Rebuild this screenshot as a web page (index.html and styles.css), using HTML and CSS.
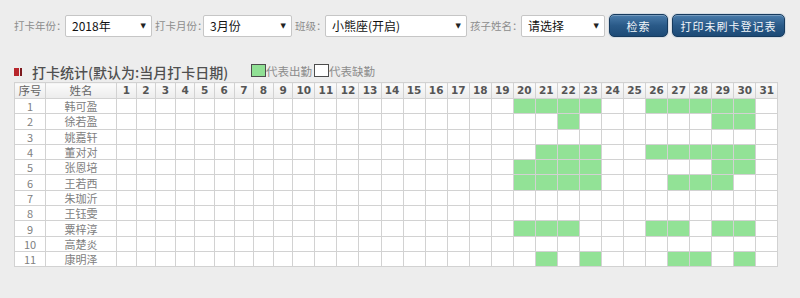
FILE: index.html
```html
<!DOCTYPE html>
<html lang="zh-CN">
<head>
<meta charset="utf-8">
<title>打卡统计</title>
<link rel="stylesheet" href="styles.css">
</head>
<body>
<div class="page">
  <div class="toolbar">
    <span class="lbl l1">打卡年份：</span>
    <div class="sel s1"><span>2018年</span><span class="arrow">▼</span></div>
    <span class="lbl l2">打卡月份：</span>
    <div class="sel s2"><span>3月份</span><span class="arrow">▼</span></div>
    <span class="lbl l3">班级：</span>
    <div class="sel s3"><span>小熊座(开启)</span><span class="arrow">▼</span></div>
    <span class="lbl l4">孩子姓名：</span>
    <div class="sel s4"><span>请选择</span><span class="arrow">▼</span></div>
    <div class="btn b1">检索</div>
    <div class="btn b2">打印未刷卡登记表</div>
  </div>

  <div class="titlebar">
    <span class="mark"><i class="m1"></i><i class="m2"></i></span>
    <span class="title">打卡统计(默认为:当月打卡日期)</span>
    <span class="box green"></span><span class="legend">代表出勤</span>
    <span class="box white"></span><span class="legend">代表缺勤</span>
  </div>

  <table class="grid">
    <colgroup>
      <col class="c-no"><col class="c-name">
      <col class="c-s"><col class="c-s"><col class="c-s"><col class="c-s"><col class="c-s"><col class="c-s"><col class="c-s"><col class="c-s"><col class="c-s">
      <col class="c-w"><col class="c-w"><col class="c-w"><col class="c-w"><col class="c-w"><col class="c-w"><col class="c-w"><col class="c-w"><col class="c-w"><col class="c-w"><col class="c-w">
      <col class="c-w"><col class="c-w"><col class="c-w"><col class="c-w"><col class="c-w"><col class="c-w"><col class="c-w"><col class="c-w"><col class="c-w"><col class="c-w"><col class="c-w">
    </colgroup>
    <thead>
      <tr>
        <th class="hn">序号</th><th class="hn">姓名</th>
        <th>1</th><th>2</th><th>3</th><th>4</th><th>5</th><th>6</th><th>7</th><th>8</th><th>9</th><th>10</th>
        <th>11</th><th>12</th><th>13</th><th>14</th><th>15</th><th>16</th><th>17</th><th>18</th><th>19</th><th>20</th>
        <th>21</th><th>22</th><th>23</th><th>24</th><th>25</th><th>26</th><th>27</th><th>28</th><th>29</th><th>30</th><th>31</th>
      </tr>
    </thead>
    <tbody>
      <tr><td>1</td><td>韩可盈</td><td></td><td></td><td></td><td></td><td></td><td></td><td></td><td></td><td></td><td></td><td></td><td></td><td></td><td></td><td></td><td></td><td></td><td></td><td></td><td class="g"></td><td class="g"></td><td class="g"></td><td class="g"></td><td></td><td></td><td class="g"></td><td class="g"></td><td class="g"></td><td class="g"></td><td class="g"></td><td></td></tr>
      <tr><td>2</td><td>徐若盈</td><td></td><td></td><td></td><td></td><td></td><td></td><td></td><td></td><td></td><td></td><td></td><td></td><td></td><td></td><td></td><td></td><td></td><td></td><td></td><td></td><td></td><td class="g"></td><td></td><td></td><td></td><td></td><td></td><td></td><td class="g"></td><td class="g"></td><td></td></tr>
      <tr><td>3</td><td>姚嘉轩</td><td></td><td></td><td></td><td></td><td></td><td></td><td></td><td></td><td></td><td></td><td></td><td></td><td></td><td></td><td></td><td></td><td></td><td></td><td></td><td></td><td></td><td></td><td></td><td></td><td></td><td></td><td></td><td></td><td></td><td></td><td></td></tr>
      <tr><td>4</td><td>董对对</td><td></td><td></td><td></td><td></td><td></td><td></td><td></td><td></td><td></td><td></td><td></td><td></td><td></td><td></td><td></td><td></td><td></td><td></td><td></td><td></td><td class="g"></td><td class="g"></td><td class="g"></td><td></td><td></td><td class="g"></td><td class="g"></td><td class="g"></td><td class="g"></td><td class="g"></td><td></td></tr>
      <tr><td>5</td><td>张恩培</td><td></td><td></td><td></td><td></td><td></td><td></td><td></td><td></td><td></td><td></td><td></td><td></td><td></td><td></td><td></td><td></td><td></td><td></td><td></td><td class="g"></td><td class="g"></td><td class="g"></td><td class="g"></td><td></td><td></td><td></td><td></td><td></td><td class="g"></td><td class="g"></td><td></td></tr>
      <tr><td>6</td><td>王若西</td><td></td><td></td><td></td><td></td><td></td><td></td><td></td><td></td><td></td><td></td><td></td><td></td><td></td><td></td><td></td><td></td><td></td><td></td><td></td><td class="g"></td><td class="g"></td><td class="g"></td><td class="g"></td><td></td><td></td><td></td><td class="g"></td><td class="g"></td><td class="g"></td><td></td><td></td></tr>
      <tr><td>7</td><td>朱珈沂</td><td></td><td></td><td></td><td></td><td></td><td></td><td></td><td></td><td></td><td></td><td></td><td></td><td></td><td></td><td></td><td></td><td></td><td></td><td></td><td></td><td></td><td></td><td></td><td></td><td></td><td></td><td></td><td></td><td></td><td></td><td></td></tr>
      <tr><td>8</td><td>王钰雯</td><td></td><td></td><td></td><td></td><td></td><td></td><td></td><td></td><td></td><td></td><td></td><td></td><td></td><td></td><td></td><td></td><td></td><td></td><td></td><td></td><td></td><td></td><td></td><td></td><td></td><td></td><td></td><td></td><td></td><td></td><td></td></tr>
      <tr><td>9</td><td>粟梓淳</td><td></td><td></td><td></td><td></td><td></td><td></td><td></td><td></td><td></td><td></td><td></td><td></td><td></td><td></td><td></td><td></td><td></td><td></td><td></td><td class="g"></td><td class="g"></td><td class="g"></td><td></td><td></td><td></td><td class="g"></td><td class="g"></td><td></td><td class="g"></td><td class="g"></td><td></td></tr>
      <tr><td>10</td><td>高楚炎</td><td></td><td></td><td></td><td></td><td></td><td></td><td></td><td></td><td></td><td></td><td></td><td></td><td></td><td></td><td></td><td></td><td></td><td></td><td></td><td></td><td></td><td></td><td></td><td></td><td></td><td></td><td></td><td></td><td></td><td></td><td></td></tr>
      <tr><td>11</td><td>康明泽</td><td></td><td></td><td></td><td></td><td></td><td></td><td></td><td></td><td></td><td></td><td></td><td></td><td></td><td></td><td></td><td></td><td></td><td></td><td></td><td></td><td class="g"></td><td></td><td class="g"></td><td></td><td></td><td></td><td class="g"></td><td class="g"></td><td></td><td class="g"></td><td></td></tr>
    </tbody>
  </table>
</div>
</body>
</html>
```

FILE: styles.css
```css
html, body {
  margin: 0;
  padding: 0;
}
body {
  background: #ededed;
  font-family: "Noto Sans CJK SC", "Noto Sans", sans-serif;
  color: #555;
}
.page {
  padding: 14px 0 0 14px;
}

/* toolbar */
.toolbar {
  display: flex;
  align-items: center;
  height: 23px;
}
.lbl {
  flex: 0 0 auto;
  box-sizing: border-box;
  font-size: 10.5px;
  color: #8c8c8c;
  white-space: nowrap;
  padding-left: 3px;
  line-height: 22px;
}
.l1 { width: 51px; padding-left: 0; }
.l2 { width: 51px; }
.l3 { width: 33px; }
.l4 { width: 54px; }

.sel {
  flex: 0 0 auto;
  box-sizing: border-box;
  height: 22px;
  display: flex;
  align-items: center;
  justify-content: space-between;
  background: #fff;
  border: 1px solid #c6c6c6;
  border-radius: 2px;
  padding: 0 5px 0 6px;
  font-size: 12px;
  color: #111;
}
.s1 { width: 87px; }
.s2 { width: 89px; }
.s3 { width: 142px; }
.s4 { width: 84px; }
.arrow {
  font-size: 7px;
  color: #222;
  font-family: "DejaVu Sans", sans-serif;
}

.btn {
  flex: 0 0 auto;
  box-sizing: border-box;
  height: 23px;
  margin-left: 4px;
  display: flex;
  align-items: center;
  justify-content: center;
  border: 1px solid #173b5e;
  border-radius: 5px;
  background: linear-gradient(#4a7cab, #2a5a88 50%, #1d4a76);
  box-shadow: 0 0 0 1px #d6dde4, inset 0 1px 0 rgba(255, 255, 255, 0.25);
  color: #f2f6fa;
  font-size: 11px;
  letter-spacing: 1px;
}
.b1 { width: 59px; }
.b2 { width: 113px; }

/* title row */
.titlebar {
  display: flex;
  align-items: center;
  height: 20px;
  margin-top: 25px;
}
.mark {
  display: flex;
  gap: 1px;
  width: 18px;
  flex: 0 0 18px;
}
.mark i {
  display: block;
  height: 8px;
}
.mark .m1 { width: 5px; background: #b8262c; }
.mark .m2 { width: 2px; background: #7d1a1e; }
.title {
  flex: 0 0 219px;
  font-size: 14px;
  font-weight: 500;
  color: #505050;
  white-space: nowrap;
  line-height: 20px;
}
.box {
  box-sizing: border-box;
  width: 15px;
  height: 13px;
  border: 1px solid #4d4d4d;
  margin-top: -3px;
}
.box.green { background: #90e094; }
.box.white { background: #fff; margin-left: 2px; }
.legend {
  font-size: 11.5px;
  color: #8c8c8c;
  line-height: 14px;
  margin-top: -3px;
}

/* table */
.grid {
  border-collapse: collapse;
  table-layout: fixed;
  width: 763px;
  background: #fff;
  border: 1px solid #bdbdbd;
}
.c-no { width: 31px; }
.c-name { width: 71px; }
.c-s { width: 19.6px; }
.c-w { width: 22.05px; }
.grid th, .grid td {
  border: 1px solid #d2d2d2;
  padding: 0;
  text-align: center;
  white-space: nowrap;
  overflow: hidden;
}
.grid th {
  height: 15px;
  background: linear-gradient(#fbfbfb, #ececec);
  font-family: "DejaVu Sans", "Noto Sans CJK SC", sans-serif;
  font-weight: bold;
  font-size: 10.5px;
  color: #555;
  line-height: 15px;
}
.grid th.hn {
  font-family: "Noto Sans CJK SC", sans-serif;
  font-weight: normal;
  font-size: 11.5px;
  color: #666;
}
.grid td {
  height: 14.3px;
  font-size: 11px;
  line-height: 14px;
  color: #808080;
}
.grid td.g {
  background: #92e296;
}
```
